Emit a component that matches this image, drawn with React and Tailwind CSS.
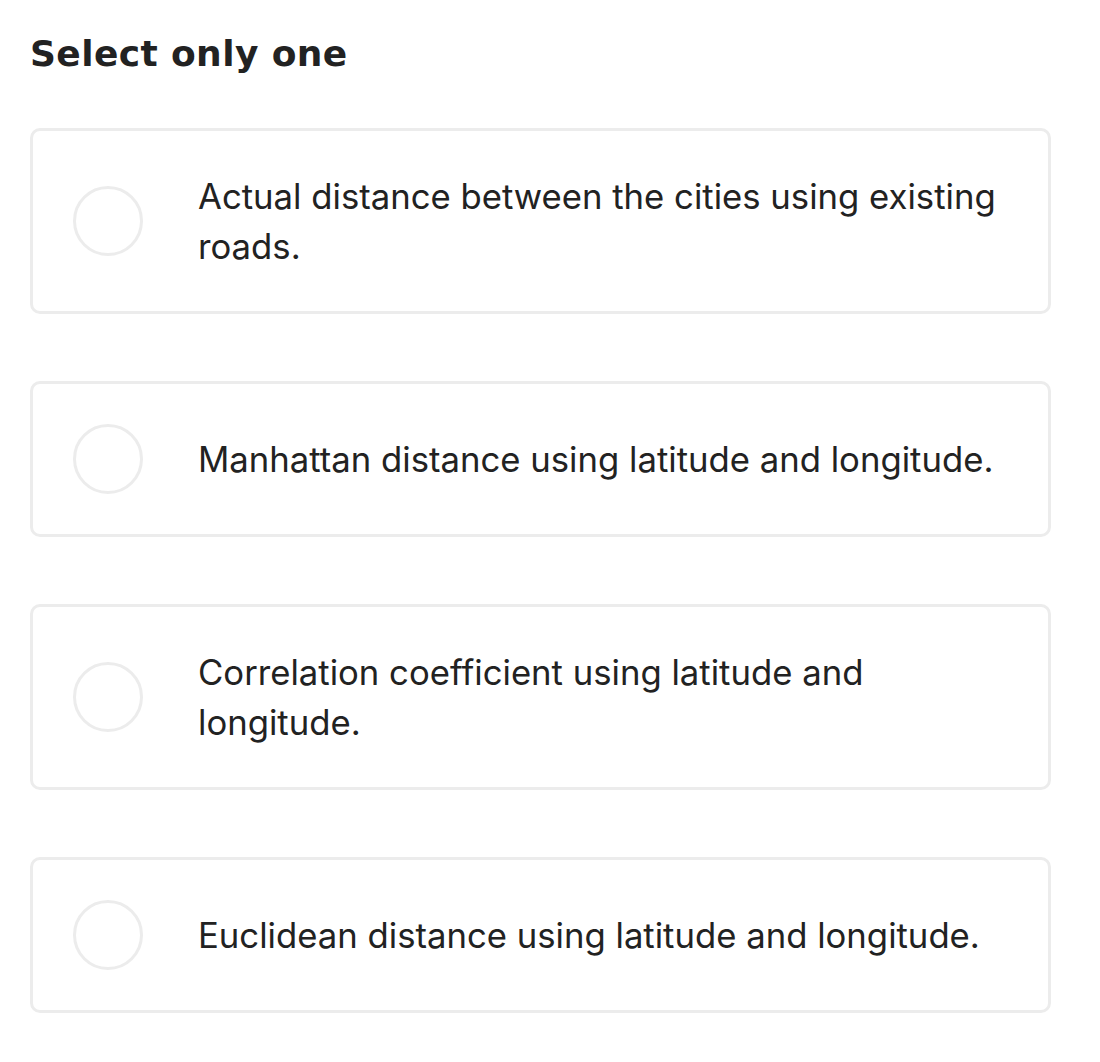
import React from "react";

const options = [
  "Actual distance between the cities using existing roads.",
  "Manhattan distance using latitude and longitude.",
  "Correlation coefficient using latitude and longitude.",
  "Euclidean distance using latitude and longitude.",
];

const App = () => {
  return (
    <div className="bg-white min-h-screen px-[30px] pt-[28px] text-[#222222] font-['Inter',sans-serif]">
      <h1 className="text-[36px] font-bold leading-[52px] font-['DejaVu_Sans',sans-serif] tracking-[0.4px]">
        Select only one
      </h1>

      <div className="mt-[48px] flex flex-col gap-[67px] w-[1021px]">
        {options.map((text) => (
          <label
            key={text}
            className="flex items-center border-[3px] border-[#ececec] rounded-[10px] pl-[40px] pr-[40px] py-[40px] cursor-pointer"
          >
            <span className="shrink-0 w-[70px] h-[70px] rounded-full border-[3px] border-[#ececec]" />
            <span className="ml-[55px] text-[34.7px] leading-[50px]">{text}</span>
          </label>
        ))}
      </div>
    </div>
  );
};

export default App;
